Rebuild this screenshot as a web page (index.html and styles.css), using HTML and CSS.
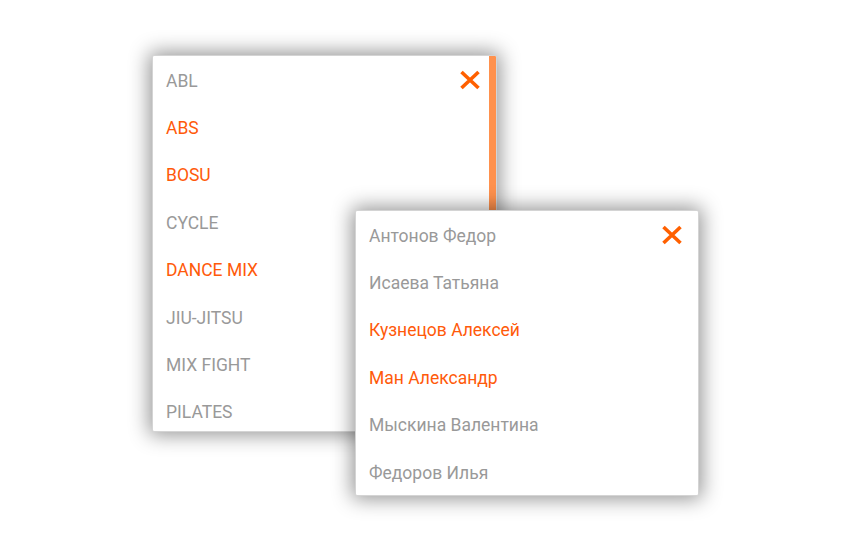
FILE: index.html
```html
<!DOCTYPE html>
<html lang="ru">
<head>
<meta charset="utf-8">
<title>Dropdowns</title>
<link rel="stylesheet" href="styles.css">
</head>
<body>
<div class="canvas">
  <div class="dropdown dd-sports">
    <ul class="list">
      <li class="item muted"><span>ABL</span>
        <svg class="close" viewBox="0 0 22 20" width="22" height="20"><path d="M2.5 2 L19.5 18 M19.5 2 L2.5 18" /></svg>
      </li>
      <li class="item active"><span>ABS</span></li>
      <li class="item active"><span>BOSU</span></li>
      <li class="item muted"><span>CYCLE</span></li>
      <li class="item active"><span>DANCE MIX</span></li>
      <li class="item muted"><span>JIU-JITSU</span></li>
      <li class="item muted"><span>MIX FIGHT</span></li>
      <li class="item muted"><span>PILATES</span></li>
    </ul>
    <div class="thumb"></div>
  </div>
  <div class="dropdown dd-names">
    <ul class="list">
      <li class="item muted"><span>Антонов Федор</span>
        <svg class="close" viewBox="0 0 22 20" width="22" height="20"><path d="M2.5 2 L19.5 18 M19.5 2 L2.5 18" /></svg>
      </li>
      <li class="item muted"><span>Исаева Татьяна</span></li>
      <li class="item active"><span>Кузнецов Алексей</span></li>
      <li class="item active"><span>Ман Александр</span></li>
      <li class="item muted"><span>Мыскина Валентина</span></li>
      <li class="item muted"><span>Федоров Илья</span></li>
    </ul>
  </div>
</div>
</body>
</html>
```

FILE: styles.css
```css
html, body {
  margin: 0;
  padding: 0;
  background: #ffffff;
}

.canvas {
  position: relative;
  width: 850px;
  height: 550px;
  overflow: hidden;
  font-family: Roboto, "Liberation Sans", sans-serif;
}

.dropdown {
  position: absolute;
  background: #ffffff;
  border: 1px solid #d4d4d4;
  border-radius: 2px;
  box-shadow: 0 0 20px 3px rgba(0, 0, 0, 0.42);
  overflow: hidden;
  box-sizing: border-box;
}

.dd-sports {
  left: 152px;
  top: 55px;
  width: 345px;
  height: 377px;
}

.dd-names {
  left: 355px;
  top: 210px;
  width: 344px;
  height: 286px;
}

.list {
  list-style: none;
  margin: 0;
  padding: 0;
}

.item {
  height: 47.4px;
  display: flex;
  align-items: center;
  justify-content: space-between;
  padding: 2px 15px 0 13px;
  font-size: 17.5px;
  box-sizing: border-box;
}

.item .close {
  margin-top: -2px;
}

.muted {
  color: #999999;
}

.active {
  color: #ff5a0a;
}

.close {
  display: block;
  flex: none;
}

.close path {
  fill: none;
  stroke: #ff6000;
  stroke-width: 3.6;
}

.thumb {
  position: absolute;
  top: 0;
  right: 0;
  width: 7px;
  height: 300px;
  background: #ff914d;
}
```
